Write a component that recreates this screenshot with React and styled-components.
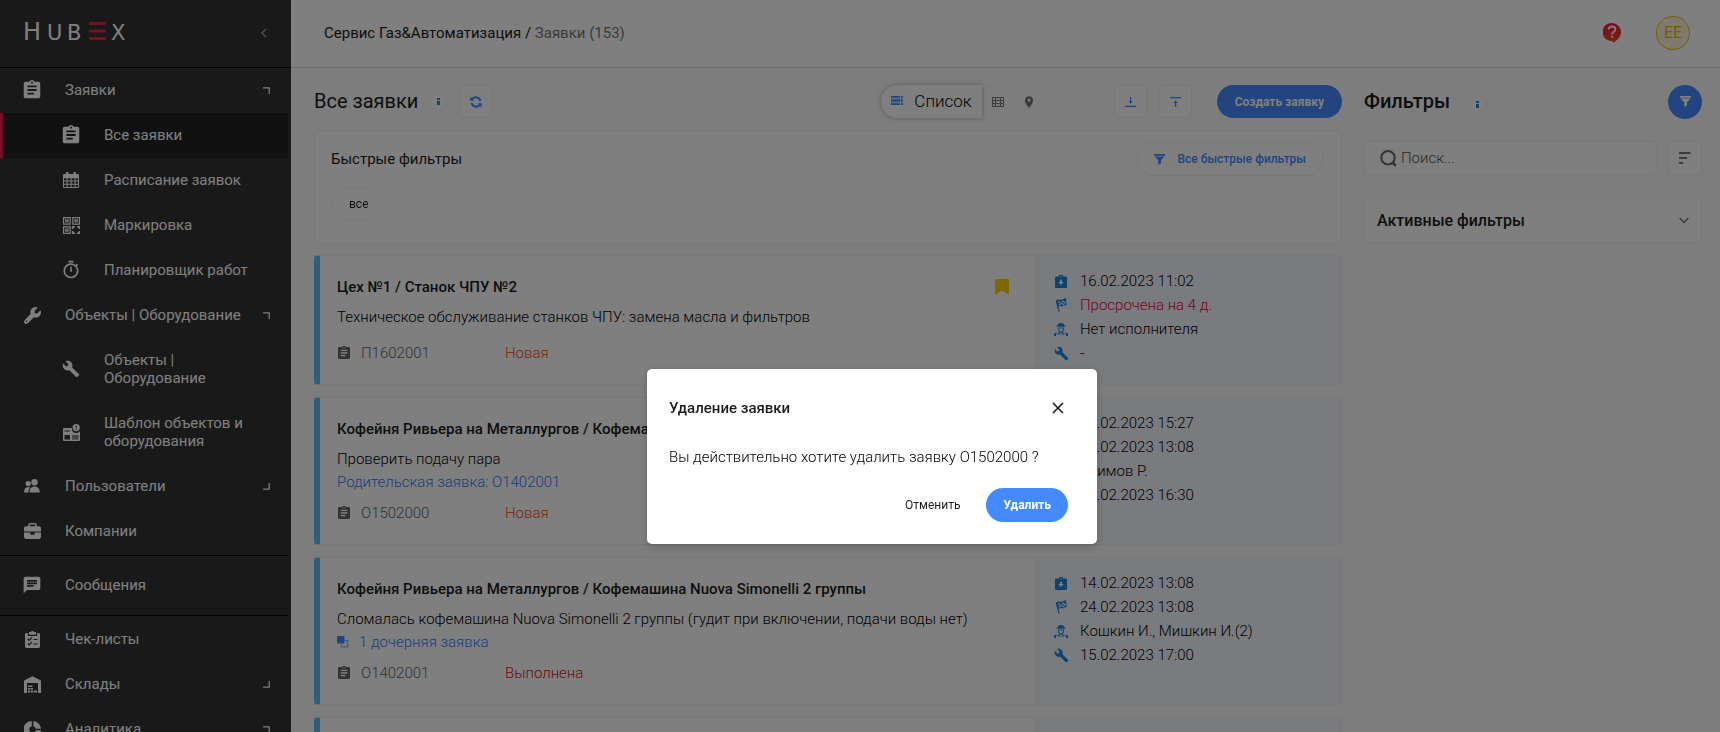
import React from "react";
import styled, { createGlobalStyle, css } from "styled-components";
import { MdAssignment, MdBuild, MdChat, MdOutlineTimer, MdPlace } from "react-icons/md";
import { FaWrench, FaBriefcase } from "react-icons/fa6";

const c = {
  blue: "#4589ff",
  ink: "#1c1c1c",
  line: "#f0f0f0",
  page: "#fafafa",
  side: "#333",
  red: "#f01c44",
  grey: "#777",
};

const Global = createGlobalStyle`
  *, *::before, *::after { box-sizing: border-box; }
  body {
    margin: 0;
    overflow: hidden;
    background: ${c.page};
    color: ${c.ink};
    font-family: Roboto, "Liberation Sans", sans-serif;
    font-size: 15px;
    line-height: 20px;
  }
  button, input { font-family: inherit; margin: 0; }
  button { cursor: pointer; padding: 0; }
  a { color: inherit; text-decoration: none; }
  h1, h2, h3, p, ul { margin: 0; padding: 0; }
  ul { list-style: none; }
  svg { display: block; flex: none; }
`;

/* ---------- custom icons ---------- */

const CalendarIcon = () => (
  <svg width="16" height="16" viewBox="0 0 16 16" fill="currentColor">
    <path fillRule="evenodd" d="M1.3 2H3V.8a1.3 1.3 0 0 1 2.6 0V2h4.8V.8a1.3 1.3 0 0 1 2.6 0V2h1.7C15.5 2 16 2.6 16 3.3v11.4c0 .8-.6 1.3-1.3 1.3H1.3C.5 16 0 15.400 0 14.700V3.300C0 2.600.5 2 1.300 2zM1 6.200v2.300h2.600V6.200zm3.600 0v2.300h3V6.200zm4 0v2.300h3V6.200zm4 0v2.300H15V6.200zM1 9.500v2.300h2.600V9.500zm3.600 0v2.300h3V9.500zm4 0v2.300h3V9.500zm4 0v2.300H15V9.500zM1 12.800V15h2.600v-2.200zm3.600 0V15h3v-2.200zm4 0V15h3v-2.200zm4 0V15H15v-2.200z" />
  </svg>
);

const QrIcon = () => (
  <svg width="17" height="17" viewBox="0 0 17 17" fill="none" stroke="currentColor" strokeWidth="1.200">
    <path d="M.6.6h6.600v6.600H.600zM9.800.600h6.600v6.600H9.800zM.600 9.800h6.600v6.600H.600zM2.800 2.800H5V5H2.800zM12 2.800h2.200V5H12zM2.800 12H5v2.200H2.800z" />
    <path d="M9.700 12V9.700H12M14 9.700h2.400V12M16.400 14v2.400H14M12 16.400H9.700V14" strokeWidth="1.600" />
  </svg>
);

const TemplateIcon = () => (
  <svg width="17" height="17" viewBox="0 0 17 17" fill="currentColor">
    <path fillRule="evenodd" d="M1 4h8v1.500C9 8 11 9 13 9s3-.6 4-1.500V16a1 1 0 0 1-1 1H1a1 1 0 0 1-1-1V5a1 1 0 0 1 1-1zm.5 2.500v1H7v-1zm0 4.500v4.500H7V11zM9 11v4.500h6.500V11z" />
    <path d="M9 11h6.500v4.500H9zM1.500 8.600H7v.900H1.500z" opacity=".45" />
    <path fillRule="evenodd" d="M13.200 0a3.600 3.600 0 1 1 0 7.200 3.600 3.600 0 0 1 0-7.200zm-.5 1.500v2.600h1V1.500zm0 3.300v1h1v-1z" />
  </svg>
);

const UsersIcon = () => (
  <svg width="16" height="14" viewBox="0 0 16 14" fill="currentColor">
    <circle cx="10.500" cy="3.300" r="3.200" />
    <path d="M5.500 13.500c0-3.700 1.900-6 5-6s5.300 2.300 5.300 6z" />
    <circle cx="4.200" cy="4.600" r="2.600" />
    <path d="M0 13.500C0 10.200 1.400 8 4.200 8c.9 0 1.600.2 2.100.6C5 9.800 4.500 11.500 4.500 13.500z" />
  </svg>
);

const ChecklistIcon = () => (
  <svg width="15" height="17" viewBox="0 0 15 17">
    <path fill="currentColor" d="M1.500 2H4V1h2a1.600 1.600 0 0 1 3 0h2v1h2.500c.8 0 1.500.7 1.500 1.500v12c0 .800-.700 1.500-1.500 1.500h-12C.700 17 0 16.300 0 15.500v-12C0 2.700.700 2 1.500 2z" />
    <path fill="none" stroke="#333" strokeWidth="1.200" d="M3.500 2.200v2.200h8V2.200M2.800 8l1.300 1.300L6.800 6.500M2.800 12.500l1.300 1.300 2.700-2.800M8.500 8.500h4M8.500 13h4" />
  </svg>
);

const WarehouseIcon = () => (
  <svg width="17" height="17" viewBox="0 0 17 17" fill="currentColor">
    <path d="M0 4.500 8.500.200 17 4.500V17h-3V7H3v10H0z" />
    <path d="M4 9.500h4.500V11H4zM4 12h2.500v1.600H4zM7 12h2v1.600H7zM4 14.600h2v1.800H4zM6.700 14.600h2.600v1.800H6.700zM10 14.600h3v1.800h-3z" />
  </svg>
);

const PieIcon = () => (
  <svg width="17" height="17" viewBox="0 0 17 17" fill="currentColor">
    <path d="M7.800 0v5.300a3.300 3.300 0 0 0 0 6.400V17A8.500 8.500 0 0 1 7.800 0zM9.300 0A8.500 8.500 0 0 1 17 7.700h-5.300a3.300 3.300 0 0 0-2.400-2.400zM17 9.300A8.500 8.500 0 0 1 9.300 17v-5.300a3.300 3.300 0 0 0 2.400-2.400z" />
  </svg>
);

const ClosedCorner = () => (
  <svg width="7" height="7" viewBox="0 0 7 7" fill="none" stroke="currentColor" strokeWidth="1.300">
    <path d="M0 6.200h6.200V0" />
  </svg>
);
const OpenCorner = () => (
  <svg width="7" height="7" viewBox="0 0 7 7" fill="none" stroke="currentColor" strokeWidth="1.300">
    <path d="M0 .8h6.200V7" />
  </svg>
);

const ChevronLeft = () => (
  <svg width="6" height="10" viewBox="0 0 6 10" fill="none" stroke="currentColor" strokeWidth="1.200">
    <path d="M5.200.800 1 5l4.200 4.200" />
  </svg>
);
const ChevronDown = () => (
  <svg width="10" height="7" viewBox="0 0 10 7" fill="none" stroke="currentColor" strokeWidth="1.500">
    <path d="M.700 1 5 5.500 9.300 1" />
  </svg>
);

const RefreshIcon = () => (
  <svg width="12" height="12" viewBox="0 0 12 12" fill="none" stroke="currentColor" strokeWidth="2">
    <path d="M2.200 3A4.700 4.700 0 0 1 10.400 5M9.800 9A4.700 4.700 0 0 1 1.600 7" />
    <path d="M.200 .600v4.200h4.200zM11.800 11.400V7.200H7.600z" fill="currentColor" stroke="none" />
  </svg>
);

const InfoGlyph = () => (
  <svg width="3" height="7" viewBox="0 0 3 7" fill="#1a86dd">
    <path d="M0 0h3v2H0zM0 3h3v4H0z" />
  </svg>
);

const ListIcon = () => (
  <svg width="12" height="9" viewBox="0 0 12 9" fill="currentColor">
    <path d="M0 0h9v1.800H0zM10 0h2v1.800h-2zM0 3.600h9v1.800H0zM10 3.600h2v1.800h-2zM0 7.200h9V9H0zM10 7.200h2V9h-2z" />
    <path d="M0 1.800h12v5.400H0z" opacity=".3" />
  </svg>
);

const TableIcon = () => (
  <svg width="12" height="10" viewBox="0 0 12 10" fill="none" stroke="currentColor">
    <path d="M.500.500h11v9H.500zM0 3.500h12M0 6.500h12M3.500 0v10M8.500 0v10" />
  </svg>
);

const DownloadIcon = () => (
  <svg width="11" height="10" viewBox="0 0 11 10" fill="currentColor">
    <path d="M0 8.800h11V10H0zM5 0h1.200v4h1.600L5.600 6.600 3.300 4H5z" />
  </svg>
);
const UploadIcon = () => (
  <svg width="11" height="10" viewBox="0 0 11 10" fill="currentColor">
    <path d="M0 0h11v1.200H0zM5 10h1.200V6h1.600L5.600 3.400 3.300 6H5z" />
  </svg>
);

const FunnelIcon = () => (
  <svg width="11" height="11" viewBox="0 0 11 11" fill="currentColor">
    <path d="M0 0h11v1.700H0zM.600 2.500h9.800L7 6.300v3L4.300 11V6.300z" />
  </svg>
);

const SearchIcon = () => (
  <svg width="17" height="17" viewBox="0 0 17 17" fill="none" stroke="#666" strokeWidth="2">
    <circle cx="8" cy="7.700" r="6.700" />
    <path d="m12.500 12.500 3.300 3.300" strokeWidth="2.600" />
  </svg>
);

const SortIcon = () => (
  <svg width="12" height="12" viewBox="0 0 12 12" fill="currentColor">
    <path d="M0 0h11.500v2H0zM0 5h8v2H0zM0 10h4.200v2H0z" />
  </svg>
);

const BookmarkIcon = () => (
  <svg width="14" height="16" viewBox="0 0 14 16" fill="currentColor">
    <path d="M0 .5C0 .2.2 0 .5 0h13c.3 0 .5.2.5.500V16l-7-4.500L0 16z" />
  </svg>
);

const HelpIcon = () => (
  <svg width="18" height="20" viewBox="0 0 18 20">
    <defs>
      <linearGradient id="help" x1="0" y1="0" x2="0" y2="1">
        <stop offset="0" stopColor="#f0184c" />
        <stop offset="1" stopColor="#f0481c" />
      </linearGradient>
    </defs>
    <path fill="url(#help)" d="M9 0a9 9 0 0 1 9 9c0 4.500-3.500 8.500-8.200 11v-2.100A9 9 0 1 1 9 0z" />
    <path fill="none" stroke="#fff" strokeWidth="1.900" d="M5.700 6.600C5.700 4.600 7 3.500 9 3.500s3.400 1.200 3.400 2.900c0 2.300-3.300 2.500-3.300 5" />
    <path fill="#fff" d="M8.100 12.700h2v2h-2z" />
  </svg>
);

const CloseIcon = () => (
  <svg width="12" height="12" viewBox="0 0 12 12" fill="none" stroke="currentColor" strokeWidth="1.600">
    <path d="m1 1 10 10M11 1 1 11" />
  </svg>
);

const CopyIcon = () => (
  <svg width="12" height="12" viewBox="0 0 12 12">
    <path fill="none" stroke="#8ab2fb" strokeWidth="1.200" d="M8 4.500h2.800v6.400H4.500V8" />
    <rect width="7.500" height="7.500" rx="1" fill="#4589ff" />
  </svg>
);

const ReceivedIcon = () => (
  <svg width="12" height="13" viewBox="0 0 12 13">
    <path fill="currentColor" d="M1.300 1.600h2.500a2.200 2.200 0 0 1 4.400 0h2.500c.7 0 1.300.6 1.300 1.300v8.800c0 .7-.6 1.300-1.300 1.300H1.300C.600 13 0 12.400 0 11.700V2.900c0-.700.600-1.300 1.300-1.300z" />
    <path fill="#f5f8ff" d="M5 4.700h2v2.200h1.900L6 9.900 3.100 6.900H5z" />
    <circle cx="6" cy="1.700" r=".6" fill="#f5f8ff" />
  </svg>
);

const FlagIcon = () => (
  <svg width="12" height="14" viewBox="0 0 12 14" fill="currentColor">
    <path d="M.600 2.500 1.700 2l3 11.500-1.200.300z" />
    <path fillRule="evenodd" d="M1.500 2.300C3.800.400 5.500 2.600 7.500 1.500 9 .6 10 .4 11 .300L11.800 7c-2 0-2.600.900-4 1.200-1.800.300-3-.600-5 .900zM3 3.400l.4 1.700 1.700-.6-.300-1.600zm3.900-.4.3 1.600 1.800-.700-.300-1.500zM5.200 4.700l.4 1.600 1.800-.1-.4-1.600zm3.900-.9.3 1.600 1.700-.4-.3-1.500zM3.700 6l.4 1.600 1.500-.4-.4-1.600zm3.800-.200.300 1.600 1.700-.5-.2-1.600z" />
  </svg>
);

const WorkerIcon = () => (
  <svg width="14" height="13" viewBox="0 0 14 13" fill="currentColor">
    <path d="M3.500 2.700C3.700 1 5 0 7 0s3.300 1 3.500 2.700h1v1.100h-9V2.700z" />
    <path fillRule="evenodd" d="M3.900 4.600h6.200v1.300c0 1.400-.5 2.200-1.400 3l1.600 1.500v1.200H3.700v-1.200l1.600-1.500C4.400 8.100 3.900 7.300 3.900 5.900zM5 5.600v.6c0 1.200.9 2.100 2 2.100s2-.9 2-2.100v-.6zM5.400 10.400 7 11.200l1.600-.8L7 9.400z" opacity=".85" />
    <path d="M0 13c0-2 .9-3 2.800-3.300V11c-.8.200-1 .8-1 2zM14 13c0-2-.9-3-2.800-3.300V11c.8.200 1 .8 1 2z" />
    <path d="M0 10.500h2v2.200H0zM12 10.500h2v2.200h-2z" />
  </svg>
);

/* ---------- sidebar ---------- */

const Shell = styled.div`
  display: flex;
  height: 100vh;
  overflow: hidden;
`;

const Sidebar = styled.aside`
  flex: none;
  width: 291px;
  height: 100%;
  overflow: hidden;
  background: ${c.side};
  color: #fff;
`;

const Brand = styled.div`
  display: flex;
  justify-content: space-between;
  align-items: center;
  height: 68px;
  padding: 0 24px 2px 23px;
  border-bottom: 1px solid #000;
`;

const Logo = styled.a`
  display: flex;
  align-items: baseline;
  font: 400 21px/28px "DejaVu Sans", sans-serif;
`;
const LogoCap = styled.span`
  margin-right: 6px;
  font-size: 24px;
`;
const LogoText = styled.span`
  width: 20px;
`;
const LogoBars = styled.svg`
  margin: 0 5px 0 2px;
`;

const PlainButton = styled.button`
  display: flex;
  border: 0;
  background: none;
  color: inherit;
`;
const Collapse = styled(PlainButton)`
  color: #aaa;
`;

const Nav = styled.nav`
  margin-right: 3px;
`;
const NavItem = styled.a`
  display: flex;
  align-items: center;
  padding: 13px 18px 14px ${(p) => (p.$sub ? 62 : 23)}px;
  line-height: 18px;
  ${(p) => p.$boxed && css`
    margin: 1px 0;
    padding-top: 20px;
    padding-bottom: 21px;
    border: solid #000;
    border-width: 1px 0;
  `}
  ${(p) => p.$active && css`
    background: #222;
    box-shadow: inset 3px 0 ${c.red};
  `}
`;
const NavIcon = styled.span`
  display: flex;
  flex: none;
  justify-content: center;
  align-items: center;
  width: 18px;
  height: 18px;
  margin-right: 24px;
`;
const NavLabel = styled.span`
  flex: 1;
`;

const nav = [
  { label: "Заявки", icon: <MdAssignment size={22} />, open: true, corner: true },
  { label: "Все заявки", icon: <MdAssignment size={22} />, sub: true, active: true },
  { label: "Расписание заявок", icon: <CalendarIcon />, sub: true },
  { label: "Маркировка", icon: <QrIcon />, sub: true },
  { label: "Планировщик работ", icon: <MdOutlineTimer size={20} />, sub: true },
  { label: "Объекты | Оборудование", icon: <FaWrench size={17} />, open: true, corner: true },
  { label: "Объекты | Оборудование", icon: <MdBuild size={18} />, sub: true },
  { label: "Шаблон объектов и оборудования", icon: <TemplateIcon />, sub: true },
  { label: "Пользователи", icon: <UsersIcon />, corner: true },
  { label: "Компании", icon: <FaBriefcase size={17} /> },
  { label: "Сообщения", icon: <MdChat size={20} />, boxed: true },
  { label: "Чек-листы", icon: <ChecklistIcon /> },
  { label: "Склады", icon: <WarehouseIcon />, corner: true },
  { label: "Аналитика", icon: <PieIcon />, open: true, corner: true },
];

/* ---------- main area ---------- */

const Main = styled.div`
  flex: 1;
  min-width: 0;
`;

const TopBar = styled.header`
  display: flex;
  align-items: center;
  height: 68px;
  padding: 0 30px 2px 33px;
  border-bottom: 1px solid #ddd;
  background: #fff;
`;
const Crumbs = styled.div`
  flex: 1;
  font-size: 15px;
  span { color: ${c.grey}; }
`;
const Avatar = styled.button`
  width: 34px;
  height: 34px;
  margin-left: 35px;
  border: 1px solid #f0b800;
  border-radius: 50%;
  background: #fdf6dc;
  color: #f0b800;
  font-size: 16px;
`;

const Columns = styled.div`
  display: flex;
  gap: 22px;
  padding: 17px 18px 0 23px;
`;
const ListColumn = styled.main`
  flex: 1;
  min-width: 0;
`;
const FilterColumn = styled.aside`
  flex: none;
  width: 338px;
`;

const Toolbar = styled.div`
  display: flex;
  align-items: center;
  height: 33px;
  margin-bottom: ${(p) => p.$gap}px;
`;
const Heading = styled.h1`
  padding-bottom: 2px;
  font-size: 20px;
  font-weight: ${(p) => p.$weight || 400};
  line-height: 24px;
`;
const Info = styled.button`
  display: flex;
  justify-content: center;
  align-items: center;
  width: 18px;
  height: 18px;
  margin: 0 12px 0 11px;
  border: 1px solid #f2f2f2;
  border-radius: 50%;
  background: #fff;
`;
const FilterInfo = styled(Info)`
  align-self: flex-end;
  margin: 0 auto 5px 18px;
`;
const IconButton = styled.button`
  display: flex;
  flex: none;
  justify-content: center;
  align-items: center;
  width: ${(p) => p.$size || 33}px;
  height: ${(p) => p.$size || 33}px;
  border: 1px solid ${c.line};
  border-radius: 4px;
  background: #fff;
  color: ${(p) => p.$color || c.blue};
`;
const RoundButton = styled(IconButton)`
  border: 0;
  border-radius: 50%;
  background: ${c.blue};
  color: #fff;
`;
const Switcher = styled.div`
  display: flex;
  align-items: center;
  margin: 0 68px 0 auto;
`;
const ListTab = styled.button`
  display: flex;
  align-items: center;
  gap: 11px;
  height: 33px;
  padding: 0 10px 2px;
  border: 0;
  border-radius: 17px 0 0 17px;
  background: #fff;
  box-shadow: 0 0 5px rgba(0, 0, 0, 0.3);
  color: #000;
  font-size: 17px;
  font-weight: 300;
  svg { color: ${c.blue}; }
`;
const MoreTabs = styled.div`
  display: flex;
  align-items: center;
  gap: 18px;
  height: 32px;
  padding: 0 9px 0 10px;
  border: 1px solid #f3f3f3;
  border-left: 0;
  border-radius: 0 16px 16px 0;
  color: #777;
`;
const Tools = styled.div`
  display: flex;
  gap: 12px;
  margin-right: 25px;
`;
const PillButton = styled.button`
  height: ${(p) => p.$height}px;
  padding: 0 ${(p) => p.$pad}px;
  border: 0;
  border-radius: 17px;
  background: ${c.blue};
  color: #fff;
  font-size: 12px;
  font-weight: 700;
`;

const QuickCard = styled.section`
  height: 114px;
  margin-bottom: 11px;
  padding: 11px 17px 0 16px;
  border: 1px solid ${c.line};
  border-radius: 5px;
  background: #fff;
`;
const QuickHead = styled.div`
  display: flex;
  justify-content: space-between;
  align-items: center;
  margin-bottom: 11px;
`;
const QuickTitle = styled.h2`
  font-size: 15px;
  font-weight: 400;
`;
const OutlineButton = styled.button`
  display: flex;
  align-items: center;
  gap: 12px;
  height: 34px;
  padding: 0 17px 0 16px;
  border: 1px solid ${c.line};
  border-radius: 17px;
  background: #fff;
  color: ${c.blue};
  font-size: 12px;
  font-weight: 500;
`;
const Chip = styled.button`
  height: 34px;
  padding: 0 17px;
  border: 1px solid ${c.line};
  border-radius: 17px;
  background: #fff;
  color: ${c.ink};
  font-size: 12px;
  mask-image: linear-gradient(to right, #000 60%, transparent);
`;

const Cards = styled.div`
  display: flex;
  flex-direction: column;
  gap: 12px;
`;
const Card = styled.article`
  display: flex;
  min-height: 130px;
  overflow: hidden;
  border: 1px solid ${c.line};
  border-left: 6px solid #64bbf0;
  border-radius: 4px;
  background: #fff;
`;
const CardBody = styled.div`
  flex: 1;
  min-width: 0;
  padding: 21px 24px 21px 17px;
`;
const CardTop = styled.div`
  display: flex;
  justify-content: space-between;
  align-items: center;
  height: 20px;
  margin-bottom: 10px;
  svg { color: #ffd000; }
`;
const CardTitle = styled.h3`
  font-size: 15px;
  font-weight: 500;
`;
const CardText = styled.div`
  min-height: 36px;
  padding-bottom: 8px;
  color: #000;
  font-weight: 300;
`;
const CardLink = styled.a`
  display: flex;
  align-items: center;
  gap: 10px;
  color: #2f79ff;
  line-height: 26px;
`;
const CardFoot = styled.div`
  display: flex;
  align-items: center;
  color: #666;
  font-weight: 300;
`;
const TicketIcon = styled(MdAssignment)`
  margin: 0 9px 0 -1px;
`;
const TicketId = styled.span`
  width: 144px;
`;
const Status = styled.span`
  color: ${(p) => p.$color};
`;
const Facts = styled.ul`
  flex: none;
  width: 308px;
  padding: 13px 20px 0;
  background: #f5f7ff;
  font-weight: 300;
`;
const Fact = styled.li`
  display: flex;
  align-items: center;
  gap: 11px;
  height: 24px;
  color: ${(p) => (p.$late ? "#f00038" : "#000")};
`;
const FactIcon = styled.span`
  display: flex;
  justify-content: center;
  width: 16px;
  color: #1a86dd;
`;

const SearchRow = styled.div`
  display: flex;
  gap: 11px;
  margin-bottom: 23px;
`;
const SearchBox = styled.label`
  display: flex;
  flex: 1;
  align-items: center;
  gap: 4px;
  height: 34px;
  padding: 0 15px;
  border: 1px solid ${c.line};
  border-radius: 4px;
  background: #fff;
  input {
    flex: 1;
    min-width: 0;
    padding: 0;
    border: 0;
    outline: 0;
    background: none;
    font-size: 15px;
    font-weight: 300;
  }
  input::placeholder { color: #555; }
`;
const ActiveFilters = styled.button`
  display: flex;
  justify-content: space-between;
  align-items: center;
  width: 100%;
  height: 45px;
  padding: 0 12px;
  border: 1px solid ${c.line};
  border-radius: 5px;
  background: #fff;
  color: ${c.ink};
  font-size: 16px;
  font-weight: 500;
  svg { color: #777; }
`;

/* ---------- dialog ---------- */

const Overlay = styled.div`
  position: fixed;
  inset: 0;
  display: flex;
  justify-content: center;
  align-items: flex-start;
  padding: 369px 0 0 24px;
  background: rgba(0, 0, 0, 0.5);
`;
const Dialog = styled.div`
  width: 450px;
  padding: 29px 29px 22px 22px;
  border-radius: 5px;
  background: #fff;
  box-shadow: 0 2px 8px rgba(0, 0, 0, 0.2);
`;
const DialogHead = styled.div`
  display: flex;
  justify-content: space-between;
  align-items: center;
  padding-right: 4px;
`;
const DialogTitle = styled.h2`
  font-size: 15px;
  font-weight: 500;
`;
const DialogText = styled.p`
  margin: 29px 0 21px;
  color: #000;
  font-weight: 300;
`;
const DialogActions = styled.div`
  display: flex;
  justify-content: flex-end;
  align-items: center;
  gap: 26px;
`;
const CancelButton = styled(PlainButton)`
  font-size: 12px;
`;

const ticketRows = [
  {
    title: "Цех №1 / Станок ЧПУ №2",
    text: "Техническое обслуживание станков ЧПУ: замена масла и фильтров",
    marked: true,
    id: "П1602001",
    status: "Новая",
    color: "#f54a00",
    facts: ["16.02.2023 11:02", "Просрочена на 4 д.", "Нет исполнителя", "-"],
    late: true,
  },
  {
    title: "Кофейня Ривьера на Металлургов / Кофемашина Nuova Simonelli 2 группы",
    text: "Проверить подачу пара",
    link: "Родительская заявка: О1402001",
    id: "О1502000",
    status: "Новая",
    color: "#f54a00",
    facts: ["15.02.2023 15:27", "25.02.2023 13:08", "Акимов Р.", "15.02.2023 16:30"],
  },
  {
    title: "Кофейня Ривьера на Металлургов / Кофемашина Nuova Simonelli 2 группы",
    text: "Сломалась кофемашина Nuova Simonelli 2 группы (гудит при включении, подачи воды нет)",
    link: "1 дочерняя заявка",
    child: true,
    id: "О1402001",
    status: "Выполнена",
    color: "#d3142f",
    facts: ["14.02.2023 13:08", "24.02.2023 13:08", "Кошкин И., Мишкин И.(2)", "15.02.2023 17:00"],
  },
];

const factIcons = [<ReceivedIcon />, <FlagIcon />, <WorkerIcon />, <MdBuild size={15} />];

const Ticket = ({ row }) => (
  <Card>
    <CardBody>
      <CardTop>
        <CardTitle>{row.title}</CardTitle>
        {row.marked && <BookmarkIcon />}
      </CardTop>
      <CardText>
        <p>{row.text}</p>
        {row.link && (
          <CardLink href="#">
            {row.child && <CopyIcon />}
            {row.link}
          </CardLink>
        )}
      </CardText>
      <CardFoot>
        <TicketIcon size={16} />
        <TicketId>{row.id}</TicketId>
        <Status $color={row.color}>{row.status}</Status>
      </CardFoot>
    </CardBody>
    <Facts>
      {row.facts.map((fact, i) => (
        <Fact key={i} $late={row.late && i === 1}>
          <FactIcon>{factIcons[i]}</FactIcon>
          {fact}
        </Fact>
      ))}
    </Facts>
  </Card>
);

export default function App() {
  return (
    <>
      <Global />
      <Shell>
        <Sidebar>
          <Brand>
            <Logo href="#" aria-label="HubEx">
              <LogoCap>H</LogoCap>
              <LogoText>U</LogoText>
              <LogoText>B</LogoText>
              <LogoBars width="17" height="18" viewBox="0 0 17 18" fill={c.red}>
                <path d="M0 0h17v3H0zM0 7.500h17v3H0zM0 15h17v3H0z" />
              </LogoBars>
              <LogoText>X</LogoText>
            </Logo>
            <Collapse aria-label="Свернуть меню"><ChevronLeft /></Collapse>
          </Brand>
          <Nav>
            {nav.map((n, i) => (
              <NavItem key={i} href="#" $sub={n.sub} $active={n.active} $boxed={n.boxed}>
                <NavIcon>{n.icon}</NavIcon>
                <NavLabel>{n.label}</NavLabel>
                {n.corner && (n.open ? <OpenCorner /> : <ClosedCorner />)}
              </NavItem>
            ))}
          </Nav>
        </Sidebar>

        <Main>
          <TopBar>
            <Crumbs>
              Сервис Газ&amp;Автоматизация / <span>Заявки (153)</span>
            </Crumbs>
            <PlainButton aria-label="Помощь"><HelpIcon /></PlainButton>
            <Avatar>ЕЕ</Avatar>
          </TopBar>

          <Columns>
            <ListColumn>
              <Toolbar $gap={12}>
                <Heading>Все заявки</Heading>
                <Info aria-label="Справка"><InfoGlyph /></Info>
                <IconButton aria-label="Обновить"><RefreshIcon /></IconButton>
                <Switcher>
                  <ListTab><ListIcon />Список</ListTab>
                  <MoreTabs>
                    <PlainButton aria-label="Таблица"><TableIcon /></PlainButton>
                    <PlainButton aria-label="Карта"><MdPlace size={14} /></PlainButton>
                  </MoreTabs>
                </Switcher>
                <Tools>
                  <IconButton aria-label="Скачать"><DownloadIcon /></IconButton>
                  <IconButton aria-label="Загрузить"><UploadIcon /></IconButton>
                </Tools>
                <PillButton $height={33} $pad={18}>Создать заявку</PillButton>
              </Toolbar>

              <QuickCard>
                <QuickHead>
                  <QuickTitle>Быстрые фильтры</QuickTitle>
                  <OutlineButton><FunnelIcon />Все быстрые фильтры</OutlineButton>
                </QuickHead>
                <Chip>все</Chip>
              </QuickCard>

              <Cards>
                {ticketRows.map((row) => <Ticket key={row.id} row={row} />)}
                <Card>
                  <CardBody />
                  <Facts />
                </Card>
              </Cards>
            </ListColumn>

            <FilterColumn>
              <Toolbar $gap={23}>
                <Heading as="h2" $weight={500}>Фильтры</Heading>
                <FilterInfo aria-label="Справка"><InfoGlyph /></FilterInfo>
                <RoundButton $size={34} aria-label="Фильтр"><FunnelIcon /></RoundButton>
              </Toolbar>
              <SearchRow>
                <SearchBox>
                  <SearchIcon />
                  <input type="search" placeholder="Поиск..." aria-label="Поиск" />
                </SearchBox>
                <IconButton $size={34} $color="#777" aria-label="Сортировка"><SortIcon /></IconButton>
              </SearchRow>
              <ActiveFilters>Активные фильтры<ChevronDown /></ActiveFilters>
            </FilterColumn>
          </Columns>
        </Main>
      </Shell>

      <Overlay>
        <Dialog role="dialog" aria-modal="true" aria-labelledby="dialog-title">
          <DialogHead>
            <DialogTitle id="dialog-title">Удаление заявки</DialogTitle>
            <PlainButton aria-label="Закрыть"><CloseIcon /></PlainButton>
          </DialogHead>
          <DialogText>Вы действительно хотите удалить заявку О1502000 ?</DialogText>
          <DialogActions>
            <CancelButton>Отменить</CancelButton>
            <PillButton $height={34} $pad={17}>Удалить</PillButton>
          </DialogActions>
        </Dialog>
      </Overlay>
    </>
  );
}
